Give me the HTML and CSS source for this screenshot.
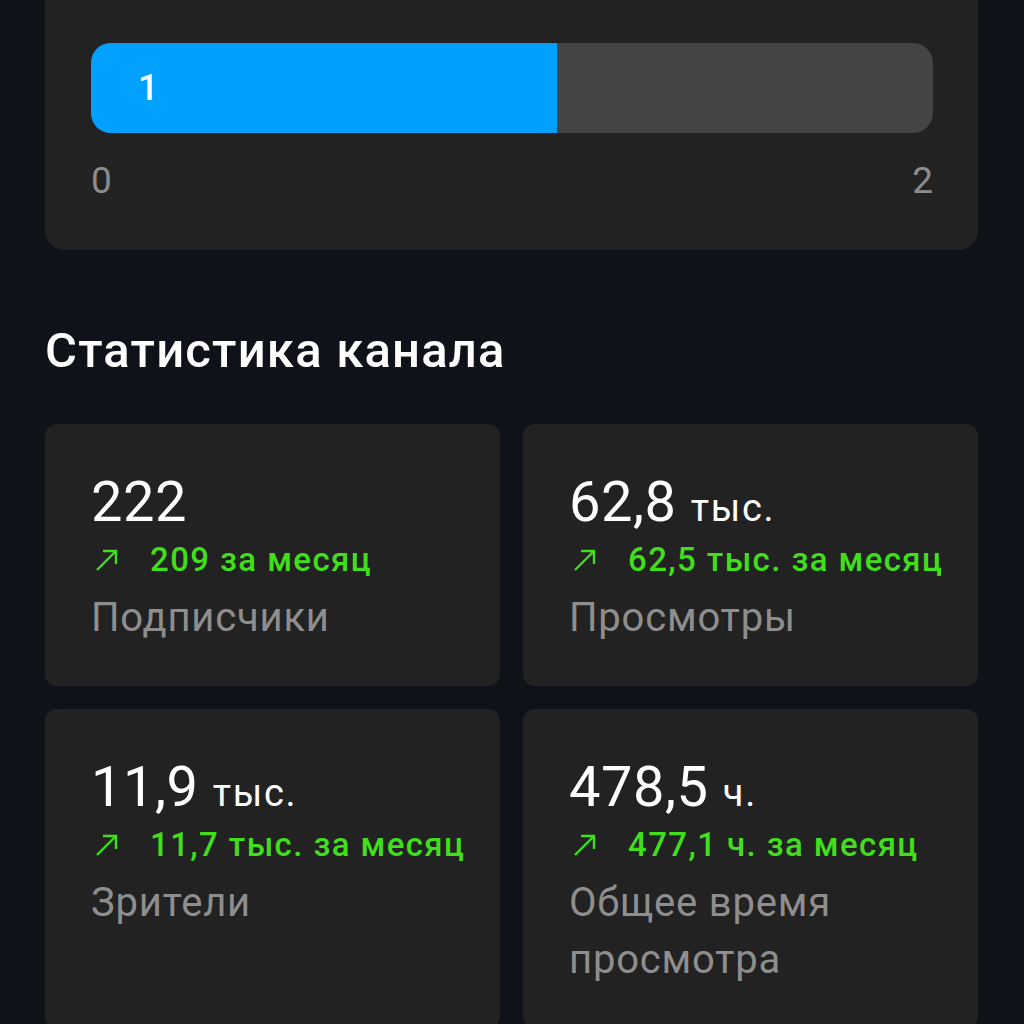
FILE: index.html
```html
<!DOCTYPE html>
<html lang="ru">
<head>
<meta charset="utf-8">
<link rel="stylesheet" href="styles.css">
</head>
<body>
<div class="page">
  <section class="goal-card">
    <div class="bar">
      <div class="bar-fill" style="width:55.3%"><span class="bar-value">1</span></div>
    </div>
    <div class="axis"><span>0</span><span>2</span></div>
  </section>

  <h2 class="section-title">Статистика канала</h2>

  <div class="stats">
    <div class="stat">
      <div class="stat-value">222</div>
      <div class="stat-delta"><svg class="arrow" viewBox="0 0 24 24"><path d="M2 22 L21 3 M8 3 H21 V16"/></svg><span>209 за месяц</span></div>
      <div class="stat-label">Подписчики</div>
    </div>
    <div class="stat">
      <div class="stat-value">62,8 <span class="unit">тыс.</span></div>
      <div class="stat-delta"><svg class="arrow" viewBox="0 0 24 24"><path d="M2 22 L21 3 M8 3 H21 V16"/></svg><span>62,5 тыс. за месяц</span></div>
      <div class="stat-label">Просмотры</div>
    </div>
    <div class="stat">
      <div class="stat-value">11,9 <span class="unit">тыс.</span></div>
      <div class="stat-delta"><svg class="arrow" viewBox="0 0 24 24"><path d="M2 22 L21 3 M8 3 H21 V16"/></svg><span>11,7 тыс. за месяц</span></div>
      <div class="stat-label">Зрители</div>
    </div>
    <div class="stat">
      <div class="stat-value">478,5 <span class="unit">ч.</span></div>
      <div class="stat-delta"><svg class="arrow" viewBox="0 0 24 24"><path d="M2 22 L21 3 M8 3 H21 V16"/></svg><span>477,1 ч. за месяц</span></div>
      <div class="stat-label">Общее время<br>просмотра</div>
    </div>
  </div>
</div>
</body>
</html>
```

FILE: styles.css
```css
html, body {
  margin: 0;
  padding: 0;
  background: #0f1219;
}
body {
  font-family: Roboto, "Noto Sans", sans-serif;
  color: #ffffff;
}
.page {
  padding: 0 46px 0 45px;
}
.goal-card {
  background: #222222;
  border-radius: 0 0 20px 20px;
  padding: 43px 45px 0 46px;
  height: 207px;
}
.bar {
  height: 90px;
  background: #444444;
  border-radius: 20px;
  overflow: hidden;
  display: flex;
}
.bar-fill {
  background: #00a0ff;
  height: 100%;
  display: flex;
  align-items: center;
  padding-left: 47px;
  box-sizing: border-box;
}
.bar-value {
  font-size: 36px;
  font-weight: 500;
  color: #ffffff;
}
.axis {
  display: flex;
  justify-content: space-between;
  margin-top: 28px;
  font-size: 37px;
  line-height: 40px;
  color: #8c8c8c;
}
.section-title {
  margin: 72px 0 0 0;
  font-size: 49px;
  line-height: 58px;
  font-weight: 500;
  letter-spacing: 1.2px;
  color: #ffffff;
}
.stats {
  margin-top: 44px;
  display: grid;
  grid-template-columns: 1fr 1fr;
  gap: 23px;
}
.stat {
  background: #222222;
  border-radius: 12px;
  padding: 49px 10px 40px 46px;
}
.stat-value {
  font-size: 56px;
  line-height: 58px;
  letter-spacing: 0.5px;
  color: #ffffff;
}
.unit {
  font-size: 38px;
  line-height: 1;
  letter-spacing: 1.7px;
}
.stat-delta {
  display: flex;
  align-items: center;
  font-size: 33px;
  line-height: 58px;
  font-weight: 500;
  letter-spacing: 1.4px;
  color: #40de1b;
  white-space: nowrap;
}
.arrow {
  width: 24px;
  height: 24px;
  margin: 0 31px 0 4px;
  fill: none;
  stroke: #40de1b;
  stroke-width: 2.4;
}
.stat-label {
  font-size: 40px;
  line-height: 57px;
  color: #8e8e8e;
  letter-spacing: 0.8px;
}
```
